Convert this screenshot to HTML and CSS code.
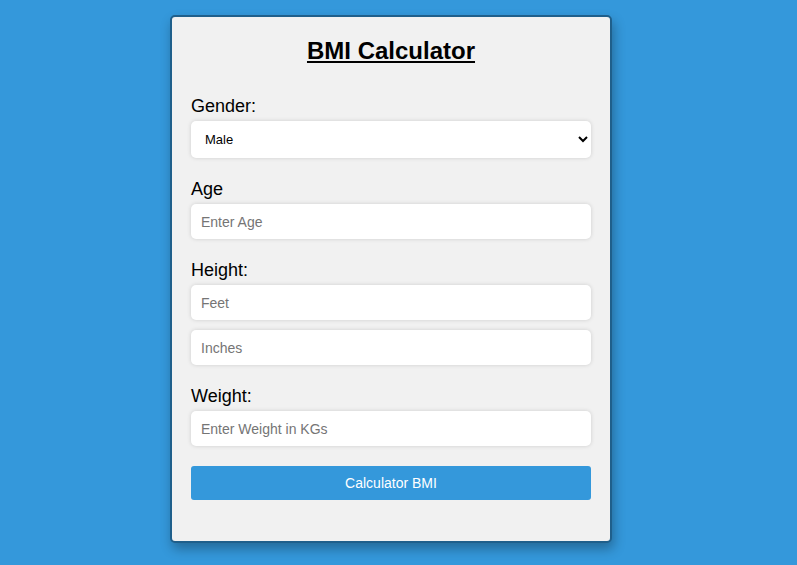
FILE: index.html
```html
<!DOCTYPE html>
<html lang="en">
<head>
<meta charset="utf-8">
<title>BMI Calculator</title>
<link rel="stylesheet" href="styles.css">
</head>
<body>
<div class="page">
  <form class="card">
    <h2 class="title">BMI Calculator</h2>
    <div class="group">
      <label class="label" for="gender">Gender:</label>
      <select id="gender" class="field select">
        <option>Male</option>
        <option>Female</option>
      </select>
    </div>
    <div class="group">
      <label class="label" for="age">Age</label>
      <input id="age" class="field" type="number" placeholder="Enter Age">
    </div>
    <div class="group">
      <label class="label" for="feet">Height:</label>
      <input id="feet" class="field" type="number" placeholder="Feet">
      <input id="inches" class="field gap" type="number" placeholder="Inches">
    </div>
    <div class="group">
      <label class="label" for="weight">Weight:</label>
      <input id="weight" class="field" type="number" placeholder="Enter Weight in KGs">
    </div>
    <button type="button" class="btn">Calculator BMI</button>
  </form>
</div>
</body>
</html>
```

FILE: styles.css
```css
html, body {
  margin: 0;
  padding: 0;
  height: 100%;
}
body {
  background: #3498db;
  font-family: "Liberation Sans", Arial, sans-serif;
  color: #000;
}
.page {
  display: flex;
  justify-content: center;
  padding: 15px 15px 0 0;
}
.card {
  width: 400px;
  background: #f1f1f1;
  border: 2px solid #1f5f8b;
  border-radius: 5px;
  padding: 20px 19px 41px;
  box-shadow: 2px 6px 12px rgba(0, 0, 0, 0.3);
}
.title {
  margin: 0 0 30px;
  font-size: 24px;
  line-height: 28px;
  font-weight: bold;
  text-align: center;
  text-decoration: underline;
}
.group {
  display: flex;
  flex-direction: column;
  margin-bottom: 20px;
}
.label {
  font-size: 18px;
  line-height: 22px;
  margin-bottom: 4px;
}
.field {
  box-sizing: border-box;
  width: 400px;
  height: 35px;
  border: none;
  border-radius: 5px;
  background: #fff;
  padding: 0 10px;
  font-family: "Liberation Sans", Arial, sans-serif;
  font-size: 14px;
  color: #000;
  box-shadow: 0 0 4px rgba(0, 0, 0, 0.15);
  outline: none;
}
.field::placeholder {
  color: #757575;
}
.field::-webkit-outer-spin-button,
.field::-webkit-inner-spin-button {
  -webkit-appearance: none;
  margin: 0;
}
input[type=number] {
  -moz-appearance: textfield;
  appearance: textfield;
}
.select {
  height: 37px;
  padding: 0 10px;
  font-size: 13px;
}
.gap {
  margin-top: 10px;
}
.btn {
  display: block;
  width: 400px;
  height: 34px;
  margin-top: 4px;
  border: none;
  border-radius: 3px;
  background: #3498db;
  color: #fff;
  font-family: "Liberation Sans", Arial, sans-serif;
  font-size: 14px;
}
```
